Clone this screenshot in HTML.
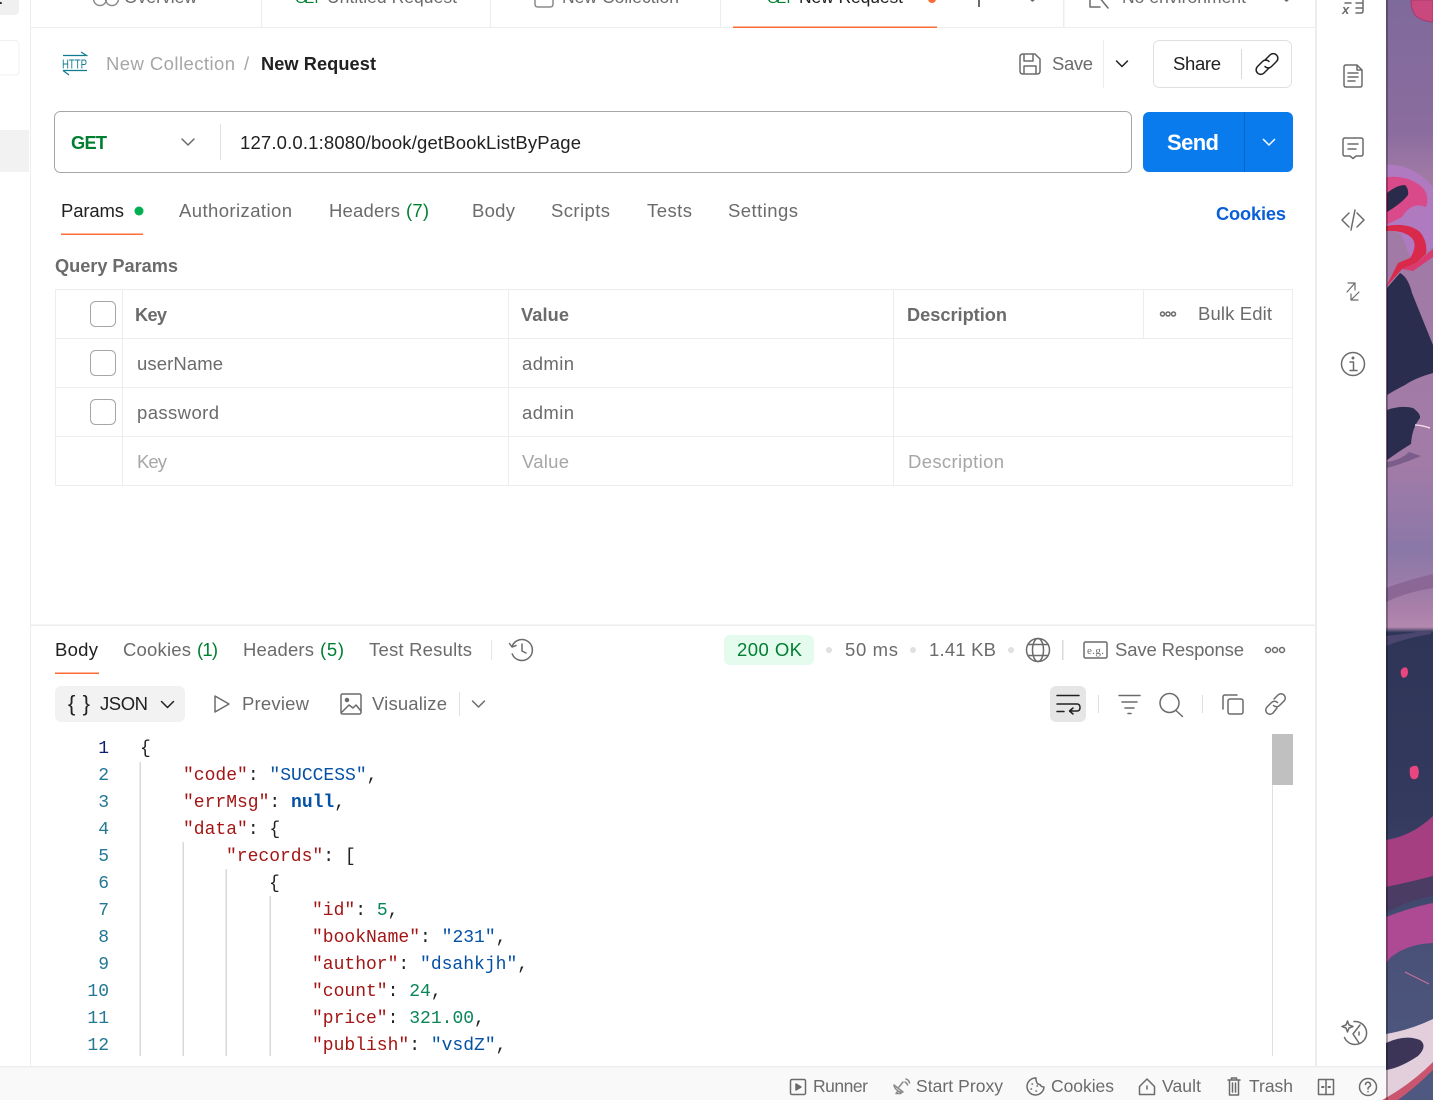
<!DOCTYPE html>
<html lang="en"><head><meta charset="utf-8"><title>New Request</title>
<style>
html,body{margin:0;padding:0;width:1433px;height:1100px;overflow:hidden;background:#fff}
svg{display:block}
text{font-family:"Liberation Sans",sans-serif;font-size:18.5px;fill:#6b6b6b;white-space:pre}
.d{fill:#212121}.g{fill:#007f31}.p{fill:#a6a6a6}.b{font-weight:700;font-size:18.2px}
.c text,text.c{font-family:"Liberation Mono",monospace;font-size:18px;fill:#212121}
.k{fill:#a31515}.s{fill:#0451a5}.n{fill:#098658}
.ln text{font-family:"Liberation Mono",monospace;font-size:18px;fill:#237893;text-anchor:end}
.i{fill:none;stroke:#6b6b6b;stroke-width:1.5;stroke-linecap:round;stroke-linejoin:round}
.i2{fill:none;stroke:#212121;stroke-width:1.5;stroke-linecap:round;stroke-linejoin:round}
.f{font-size:17.5px}
</style></head><body>
<svg xmlns="http://www.w3.org/2000/svg" width="1433" height="1100" viewBox="0 0 1433 1100">
<defs>
<linearGradient id="a" x1="0" y1="0" x2="0" y2="1">
<stop offset="0" stop-color="#7f6a9c"/><stop offset=".12" stop-color="#8b6c9f"/><stop offset=".16" stop-color="#a07aa5"/>
<stop offset=".23" stop-color="#a27aa6"/><stop offset=".42" stop-color="#a37ba7"/><stop offset=".5" stop-color="#8a78a8"/>
<stop offset=".55" stop-color="#a67ea8"/><stop offset=".57" stop-color="#b388b0"/><stop offset=".575" stop-color="#2f3557"/>
<stop offset=".74" stop-color="#343a5e"/><stop offset=".87" stop-color="#4a5279"/><stop offset="1" stop-color="#4f5880"/></linearGradient>
</defs>

<!-- wallpaper -->
<rect x="1386" width="47" height="1100" fill="url(#a)"/>
<path d="M1411 0h22v22q-12 -1 -18 -7q-4 -6 -4 -15z" fill="#c9487e" stroke="#a83a6e"/>
<path d="M1386 165q26 -2 47 22v60l-20 17l-12 -30l-15 -6z" fill="#b07ac0"/>
<path d="M1386 177q22 -2 36 10q8 8 4 20q-14 -6 -24 10l-16 8z" fill="#d84a8a"/>
<path d="M1387 193q10 -8 18 -8q4 4 3 10q-6 8 -21 17z" fill="#2a2a4a"/>
<path d="M1386 226q22 -4 34 6q8 10 6 22l-10 9l-14 6l-16 18l12 -24l12 -5q8 -12 2 -20q-8 -8 -26 -7z" fill="#d92a4c"/>
<path d="M1402 269l14 -6l17 -14v8l-20 14z" fill="#d93a70"/>
<path d="M1387 288l13 -15q8 4 12 20q8 20 21 52v28q-18 5 -28 12q-8 4 -18 10z" fill="#2a2d4e"/>
<path d="M1387 410q14 -5 26 -2q8 6 7 10q-8 10 -9 26q-10 6 -24 16z" fill="#2a2d4e"/>
<path d="M1387 462q14 -2 22 -10l12 4q-16 7 -34 12z" fill="#7a5d8a"/>
<path d="M1415 425q6 0 15 3" stroke="#f0d8e6" stroke-width="1.5" fill="none"/>
<path d="M1386 588q22 -8 47 -14v14q-26 4 -47 14z" fill="#8a6794"/>
<path d="M1386 636q20 -2 45 -6v4q-25 4 -45 12z" fill="#4a4670"/>
<path d="M1401 670q3 -4 6 -2q2 4 0 8q-3 3 -5 1q-2 -3 -1 -7zM1410 768q3 -3 7 -2q3 4 1 11q-3 4 -7 1q-2 -4 -1 -10z" fill="#e9457f"/>
<path d="M1386 840q26 -4 47 -24v60q-20 6 -47 11z" fill="#a63f82"/>
<path d="M1386 887q24 -5 47 -11v20q-25 4 -47 17z" fill="#4b3c63"/>
<path d="M1386 917q26 -10 47 -14v40q-25 1 -42 14l-5 6z" fill="#ad4a93"/>
<path d="M1405 972l24 12" stroke="#c9709e" stroke-width="1" fill="none"/>
<path d="M1386 1034Q1410 1030 1433 1019V1066Q1410 1080 1390 1100H1386Z" fill="#e3cfdc"/>
<path d="M1386 1043Q1405 1034 1420 1040Q1428 1046 1418 1056Q1400 1068 1386 1070Z" fill="#3c3557"/>
<path d="M1382 1100Q1410 1085 1433 1062V1070Q1415 1088 1398 1100Z" fill="#c9566e"/>
<path d="M1398 1100Q1415 1088 1433 1070V1100Z" fill="#4f5880"/>
<rect x="1386" width="2" height="1100" fill="#000" opacity=".28"/>

<!-- window -->
<path d="M0 0H1386V1094q0 6 -6 6H0z" fill="#fff"/>
<path d="M0 1067H1386V1094q0 6 -6 6H0z" fill="#f9f9f9"/>
<rect x="0" y="1066" width="1386" height="1.5" fill="#ededed"/>
<rect x="30" y="0" width="1" height="1066" fill="#ededed"/>
<rect x="1315" y="0" width="2" height="1066" fill="#ededed"/>
<rect x="31" y="27" width="1284" height="1" fill="#ededed"/>
<rect x="31" y="624.5" width="1284" height="1.5" fill="#ededed"/>

<!-- left rail fragments -->
<path d="M0 0H19V10q0 5 -5 5H0z" fill="#f0f0f0"/>
<text x="-4" y="4" class="d b" font-size="14">t</text>
<path d="M0 40.5H15q4 0 4 4V71q0 4 -4 4H0" fill="none" stroke="#f0f0f0"/>
<rect x="0" y="130" width="29" height="42" fill="#f2f2f2"/>

<!-- top tabs -->
<g class="i" stroke-width="1.4" style="stroke:#8a8a8a">
<circle cx="100" cy="-1" r="6.5"/><circle cx="112" cy="-1" r="6.5"/>
<path d="M535 -6V4q0 3 3 3H550q3 0 3 -3V-6"/></g>
<text y="3" x="124" textLength="73" class="f">Overview</text>
<text y="3" x="295" textLength="26" class="f g" style="font-size:15px">GET</text>
<text y="3" x="327" textLength="130" class="f">Untitled Request</text>
<text y="3" x="562" textLength="117" class="f">New Collection</text>
<text y="3" x="767" textLength="26" class="f g" style="font-size:15px">GET</text>
<text y="3" x="799" textLength="104" class="f d">New Request</text>
<circle cx="932" cy="-1" r="4" fill="#ff6c37"/>
<rect x="733" y="26.5" width="204" height="1.5" fill="#ff6c37"/>
<g fill="#ededed"><rect x="261" y="0" width="1" height="27"/><rect x="490" y="0" width="1" height="27"/><rect x="720" y="0" width="1" height="27"/><rect x="1063" y="0" width="1.5" height="27"/></g>
<rect x="978" y="0" width="2" height="7" fill="#6b6b6b"/>
<path d="M1029 -2l3.500 3l3.500 -3" class="i"/>
<path d="M1283 -2l3.500 3l3.500 -3" class="i"/>
<path d="M1090 7V-4M1090 7H1100M1099 -3l9 11" class="i"/>
<text y="3" x="1122" textLength="124" class="f">No environment</text>

<!-- breadcrumb -->
<g fill="none" stroke="#0f7c8f" stroke-width="1.2">
<path d="M63 55.500H86.500L81 52M63 70.500H87M63 70.500L69 75"/></g>
<text x="62" y="68.500" style="font-size:12.500px;fill:#0f7c8f" textLength="25" lengthAdjust="spacingAndGlyphs">HTTP</text>
<text x="106" y="70" textLength="129" class="p">New Collection</text>
<text x="244" y="70" class="p">/</text>
<text x="261" y="70" textLength="115" class="d b">New Request</text>

<path class="i" d="M1020 57q0 -3 3 -3H1035l5 5V71q0 3 -3 3H1023q-3 0 -3 -3zM1024 54v7H1033V54M1024 74V66H1036V74"/>
<text x="1052" y="70" textLength="41">Save</text>
<rect x="1103" y="40" width="1" height="48" fill="#ededed"/>
<path d="M1116.500 61l5.500 5.500l5.500 -5.500" class="i2"/>
<rect x="1153.500" y="40.500" width="138" height="47" rx="6" fill="none" stroke="#e0e0e0"/>
<text x="1173" y="70" textLength="48" class="d">Share</text>
<rect x="1241" y="49" width="1" height="30" fill="#d9d9d9"/>
<g class="i2"><path d="M1265 60l5 -5a4.500 4.500 0 0 1 6.500 6.500l-5 5a4.500 4.500 0 0 1 -6.500 0"/><path d="M1269 68l-5 5a4.500 4.500 0 0 1 -6.500 -6.500l5 -5a4.500 4.500 0 0 1 6.500 0"/></g>

<!-- url bar -->
<rect x="54.500" y="111.500" width="1077" height="61" rx="6" fill="#fff" stroke="#a6a6a6"/>
<text x="71" y="149" textLength="36" class="g b">GET</text>
<path d="M182 139l6 6l6 -6" class="i"/>
<rect x="220" y="124" width="1" height="36" fill="#e0e0e0"/>
<text x="240" y="149" textLength="341" class="d">127.0.0.1:8080/book/getBookListByPage</text>
<rect x="1143" y="112" width="150" height="60" rx="6" fill="#097bed"/>
<rect x="1244" y="112" width="1" height="60" fill="#0265d2"/>
<text x="1167" y="150" textLength="52" class="b" style="fill:#fff;font-size:22px">Send</text>
<path d="M1263 139l6 6l6 -6" fill="none" stroke="#fff" stroke-width="1.500"/>

<!-- request tabs -->
<text x="61" y="217" textLength="63" class="d">Params</text>
<circle cx="139" cy="211" r="4.500" fill="#00b050"/>
<rect x="61" y="233.500" width="82" height="1.500" fill="#ff6c37"/>
<text x="179" y="217" textLength="113">Authorization</text>
<text x="329" y="217" textLength="71">Headers</text>
<text x="406" y="217" textLength="23" class="g">(7)</text>
<text x="472" y="217" textLength="43">Body</text>
<text x="551" y="217" textLength="59">Scripts</text>
<text x="647" y="217" textLength="45">Tests</text>
<text x="728" y="217" textLength="70">Settings</text>
<text x="1216" y="220" textLength="70" class="b" style="fill:#0b5fd6">Cookies</text>
<text x="55" y="272" textLength="123" class="b">Query Params</text>

<!-- params table -->
<g fill="none" stroke="#ededed">
<rect x="55.500" y="289.500" width="1237" height="196"/>
<path d="M55 338.500H1293M55 387.500H1293M55 436.500H1293M122.500 289V486M508.500 289V486M893.500 289V486M1143.500 289V338"/></g>
<g fill="#fff" stroke="#a6a6a6"><rect x="90.500" y="301.500" width="25" height="25" rx="5"/><rect x="90.500" y="350.500" width="25" height="25" rx="5"/><rect x="90.500" y="399.500" width="25" height="25" rx="5"/></g>
<text x="135" y="321" textLength="32" class="b">Key</text>
<text x="521" y="321" textLength="48" class="b">Value</text>
<text x="907" y="321" textLength="100" class="b">Description</text>
<g class="i" stroke-width="1"><circle cx="1162.500" cy="314" r="2"/><circle cx="1168" cy="314" r="2"/><circle cx="1173.500" cy="314" r="2"/></g>
<text x="1198" y="320" textLength="74">Bulk Edit</text>
<text x="137" y="370" textLength="86">userName</text>
<text x="522" y="370" textLength="52">admin</text>
<text x="137" y="419" textLength="82">password</text>
<text x="522" y="419" textLength="52">admin</text>
<text x="137" y="468" textLength="30" class="p">Key</text>
<text x="522" y="468" textLength="47" class="p">Value</text>
<text x="908" y="468" textLength="96" class="p">Description</text>

<!-- response tabs -->
<text x="55" y="656" textLength="43" class="d">Body</text>
<rect x="55" y="672.500" width="44" height="1.500" fill="#ff6c37"/>
<text x="123" y="656" textLength="68">Cookies</text>
<text x="197" y="656" textLength="21" class="g">(1)</text>
<text x="243" y="656" textLength="71">Headers</text>
<text x="320" y="656" textLength="24" class="g">(5)</text>
<text x="369" y="656" textLength="103">Test Results</text>
<rect x="491" y="640" width="1" height="20" fill="#e6e6e6"/>
<g class="i"><path d="M512.200 654A10.500 10.500 0 1 0 512.200 646"/><path d="M509.500 643.500L512 647L516 645.500"/><path d="M522 644v7l4 2"/></g>

<rect x="724" y="635" width="90" height="30" rx="6" fill="#e5fbee"/>
<text x="737" y="656" textLength="65" class="g">200 OK</text>
<circle cx="829" cy="650" r="3" fill="#e0e0e0"/>
<text x="845" y="656" textLength="53">50 ms</text>
<circle cx="913" cy="650" r="3" fill="#e0e0e0"/>
<text x="929" y="656" textLength="67">1.41 KB</text>
<circle cx="1011" cy="650" r="3" fill="#e0e0e0"/>
<g class="i"><circle cx="1038" cy="650" r="11.500"/><ellipse cx="1038" cy="650" rx="5.500" ry="11.500"/><path d="M1028 644.500H1048M1028 655.500H1048"/></g>
<rect x="1062" y="640" width="1.500" height="20" fill="#d9d9d9"/>
<rect x="1084" y="642" width="23" height="16" rx="1.500" fill="none" stroke="#6b6b6b" stroke-width="1.500"/>
<text x="1087" y="654" style="font-size:11px;font-family:'Liberation Serif',serif" textLength="17">e.g.</text>
<text x="1115" y="656" textLength="129">Save Response</text>
<g class="i" stroke-width="1.200"><circle cx="1268" cy="650" r="2.500"/><circle cx="1275" cy="650" r="2.500"/><circle cx="1282" cy="650" r="2.500"/></g>

<!-- response toolbar -->
<rect x="55" y="686" width="130" height="36" rx="6" fill="#f2f2f2"/>
<text x="68" y="711" style="font-size:22px" class="d" textLength="22">{ }</text>
<text x="100" y="710" textLength="48" class="d">JSON</text>
<path d="M161.500 701.500l6 6l6 -6" class="i2"/>
<path d="M215 696L229 704L215 712Z" class="i"/>
<text x="242" y="710" textLength="67">Preview</text>
<g class="i"><rect x="341" y="694" width="20" height="20" rx="1.500"/><circle cx="347" cy="700" r="1.500" fill="#6b6b6b"/><path d="M342 712l7 -7l4 3l3 -3l5 6"/></g>
<text x="372" y="710" textLength="75">Visualize</text>
<rect x="459" y="692" width="1" height="24" fill="#e0e0e0"/>
<path d="M472.500 701l6 6l6 -6" class="i"/>
<rect x="1050" y="686" width="36" height="36" rx="6" fill="#e6e6e6"/>
<g class="i2"><path d="M1057 695.500H1079M1057 704H1077q3 0 3 3.500t-3 3.500H1070M1073 708l-3.500 3l3.500 3M1057 711.500H1064"/></g>
<rect x="1098" y="695" width="1" height="18" fill="#e0e0e0"/>
<path d="M1119 695.500H1140M1122 702H1137M1125 708H1134M1128 713.500H1131" class="i"/>
<g class="i"><circle cx="1169.500" cy="703" r="9.500"/><path d="M1176.500 711l6 5.500"/></g>
<rect x="1202" y="695" width="1" height="18" fill="#e0e0e0"/>
<g class="i"><rect x="1228" y="699" width="15" height="15" rx="2"/><path d="M1223 709V697q0 -2 2 -2H1237"/></g>
<g class="i"><path d="M1274 699l4 -4a4.200 4.200 0 0 1 6 6l-4.500 4.500a4.200 4.200 0 0 1 -6 0"/><path d="M1277 708l-4 5a4.200 4.200 0 0 1 -6 -6l4.500 -4.500a4.200 4.200 0 0 1 6 0"/></g>

<!-- code -->
<g class="ln">
<text x="109" y="753" style="fill:#0b216f">1</text><text x="109" y="780">2</text><text x="109" y="807">3</text><text x="109" y="834">4</text><text x="109" y="861">5</text><text x="109" y="888">6</text><text x="109" y="915">7</text><text x="109" y="942">8</text><text x="109" y="969">9</text><text x="109" y="996">10</text><text x="109" y="1023">11</text><text x="109" y="1050">12</text></g>
<g fill="#d9d9d9"><rect x="139.500" y="762" width="1.500" height="294"/><rect x="182.500" y="842" width="1.500" height="214"/><rect x="225.500" y="869" width="1.500" height="187"/><rect x="269.500" y="896" width="1.500" height="160"/></g>
<g class="c">
<text x="140" y="753">{</text>
<text x="183" y="780"><tspan class="k">"code"</tspan>: <tspan class="s">"SUCCESS"</tspan>,</text>
<text x="183" y="807"><tspan class="k">"errMsg"</tspan>: <tspan class="s" font-weight="700">null</tspan>,</text>
<text x="183" y="834"><tspan class="k">"data"</tspan>: {</text>
<text x="226" y="861"><tspan class="k">"records"</tspan>: [</text>
<text x="269" y="888">{</text>
<text x="312" y="915"><tspan class="k">"id"</tspan>: <tspan class="n">5</tspan>,</text>
<text x="312" y="942"><tspan class="k">"bookName"</tspan>: <tspan class="s">"231"</tspan>,</text>
<text x="312" y="969"><tspan class="k">"author"</tspan>: <tspan class="s">"dsahkjh"</tspan>,</text>
<text x="312" y="996"><tspan class="k">"count"</tspan>: <tspan class="n">24</tspan>,</text>
<text x="312" y="1023"><tspan class="k">"price"</tspan>: <tspan class="n">321.00</tspan>,</text>
<text x="312" y="1050"><tspan class="k">"publish"</tspan>: <tspan class="s">"vsdZ"</tspan>,</text>
</g>
<rect x="1272" y="785" width="1" height="271" fill="#e0e0e0"/>
<rect x="1272" y="734" width="21" height="51" fill="#c0c0c0"/>

<!-- right sidebar -->
<g class="i">
<path d="M1345 3H1351M1356 3H1362M1356 8H1362M1363 -2V11q0 2 -2 2H1356"/>
<text x="1342" y="14" style="font-size:13px;font-style:italic;font-weight:700;stroke:none;fill:#6b6b6b">x</text>
<path d="M1344 67q0 -2 2 -2H1357L1362 70V85q0 2 -2 2H1346q-2 0 -2 -2zM1357 65V70H1362M1348 73H1358M1348 77H1358M1348 81H1355"/>
<path d="M1343 140q0 -2 2 -2H1361q2 0 2 2V154q0 2 -2 2H1356L1353 158.500L1350 156H1345q-2 0 -2 -2zM1348 144H1358M1348 149H1356"/>
<path d="M1349 213L1342 220L1349 227M1357 213L1364 220L1357 227M1355 210L1351 230"/>
<path d="M1347 292L1355 283M1348 283H1355V290M1359 292L1351 300M1351 294V300H1358" stroke-width="1.200"/>
<circle cx="1353" cy="364" r="11.500"/>
<path d="M1350 362H1353.500V370M1350 370.500H1357"/>
<circle cx="1353" cy="358" r=".7" fill="#6b6b6b"/>
<path d="M1354 1021.500a11.500 11.500 0 1 1 -9.500 16"/>
<path d="M1347.500 1021l1.500 4l4 1.500l-4 1.500l-1.500 4l-1.500 -4l-4 -1.500l4 -1.500z"/>
<path d="M1353 1034L1360 1025M1353 1034L1359 1043M1359 1032v3"/>
</g>

<!-- status bar -->
<g class="i" stroke-width="1.200">
<rect x="790.500" y="1079.500" width="15" height="15" rx="1.500"/><path d="M796 1084L801 1087L796 1090Z" fill="#6b6b6b"/>
<path d="M897 1090a6.500 6.500 0 0 1 -3 -5l9 7a6.500 6.500 0 0 1 -6 -2zM898 1091l-2 2.500h5M899 1087l4 -5M905 1082q2 1 2.500 3M906 1079q3 1 3.500 4" style="stroke:#8a8a8a"/>
<path d="M1036 1078a8.500 8.500 0 1 0 8 9q-3 0 -4 -2.500q-3 0 -3.500 -3q-1 -2 -.5 -3.500zM1032 1084h.5M1031 1089h.5M1036 1091h.5M1037 1086h.5"/>
<path d="M1139.500 1086.500L1147 1079L1154.500 1086.500V1094.500H1139.500ZM1147 1086V1089"/>
<path d="M1228 1080H1240M1231.500 1080V1078H1236.500V1080M1229.500 1080V1095H1238.500V1080M1232.500 1083V1092M1235.500 1083V1092"/>
<rect x="1318.500" y="1079.500" width="15" height="15"/><path d="M1326 1079.500V1094.500"/><path d="M1322 1087h1.500M1328.500 1087h1.500" stroke-width="2"/>
<circle cx="1368" cy="1087" r="8.500"/><path d="M1365.500 1084.500a2.500 2.500 0 1 1 3.500 2.500q-1 .5 -1 2M1368 1091.500v.3"/>
</g>
<text x="813" y="1092" textLength="55" class="f">Runner</text>
<text x="916" y="1092" textLength="87" class="f">Start Proxy</text>
<text x="1051" y="1092" textLength="63" class="f">Cookies</text>
<text x="1162" y="1092" textLength="39" class="f">Vault</text>
<text x="1249" y="1092" textLength="44" class="f">Trash</text>
</svg>
</body></html>
